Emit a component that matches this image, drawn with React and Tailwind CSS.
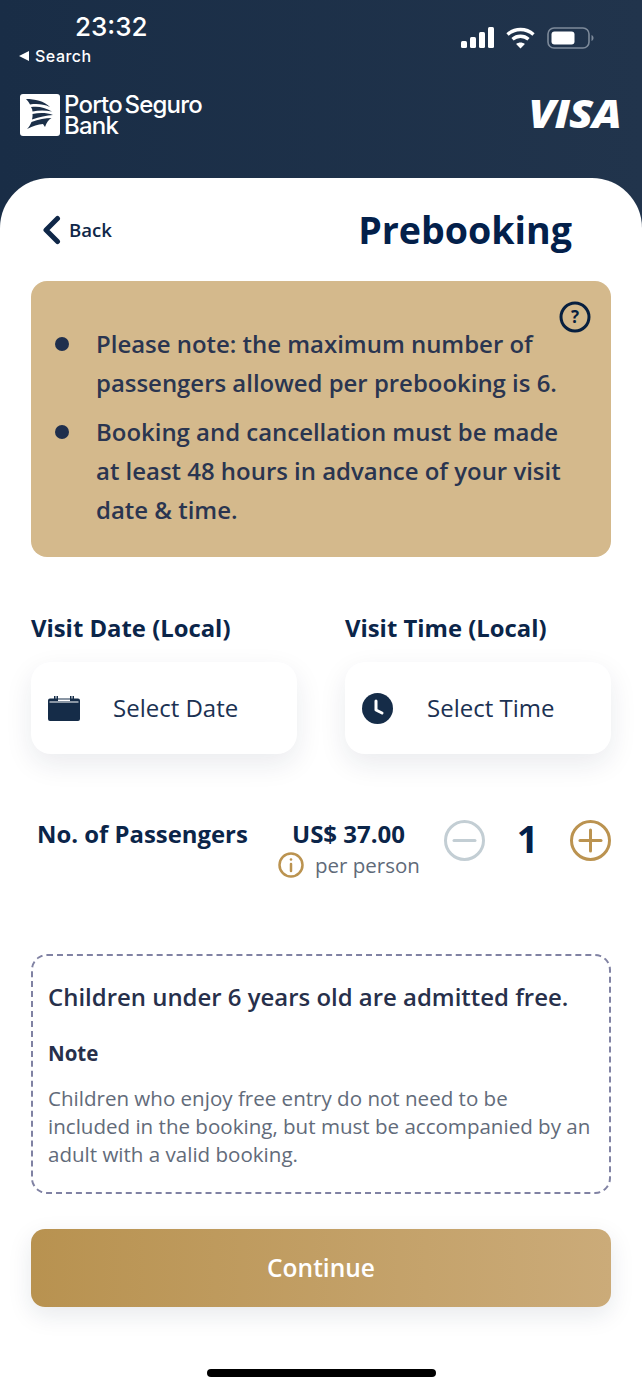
import React from "react";

const NAVY = "#0f2748";

function Signal() {
  return (
    <svg width="33" height="21" viewBox="0 0 33 21" fill="#fff">
      <rect x="0" y="14" width="6" height="7" rx="1.5" />
      <rect x="9" y="10" width="6" height="11" rx="1.5" />
      <rect x="18" y="5" width="6" height="16" rx="1.5" />
      <rect x="27" y="0" width="6" height="21" rx="1.5" />
    </svg>
  );
}

function Wifi() {
  return (
    <svg width="29" height="22" viewBox="0 0 29 22" fill="none" stroke="#fff" strokeWidth="3.4">
      <path d="M1.5 7.5C9 .8 20 .8 27.5 7.5" />
      <path d="M6.5 12.3c4.6-4 11.4-4 16 0" />
      <path d="M14.5 21.5l-4.4-4.6c2.5-2 6.3-2 8.8 0z" fill="#fff" stroke="none" />
    </svg>
  );
}

function Battery() {
  return (
    <svg width="47" height="22" viewBox="0 0 47 22" fill="none">
      <rect x="1" y="1" width="41" height="20" rx="6" stroke="#7d8a9a" strokeWidth="1.6" />
      <rect x="4.5" y="4.5" width="23" height="13" rx="3" fill="#fff" />
      <path d="M44.5 8v6c1.4-.5 2-1.7 2-3s-.6-2.500-2-3z" fill="#7d8a9a" />
    </svg>
  );
}

function PortoLogo() {
  return (
    <svg width="40" height="42" viewBox="0 0 40 42">
      <rect width="40" height="42" rx="3" fill="#fff" />
      <path d="M6 5c9 0 18 2 24 8-7-3-13-3.500-20-2.500C9 8.500 7.500 6.500 6 5z" fill="#1b2f48" />
      <path d="M11 13c7-1 14 0 21 4.500-7-1.500-13-1.500-19.500 0 0-1.500-.5-3-1.500-4.500z" fill="#1b2f48" />
      <path d="M12.500 20c7-1.500 14-1.500 20.500 1-6.500.5-13.500 2-21 4.500.5-2 .7-3.500.5-5.500z" fill="#1b2f48" />
      <path d="M11.500 28c7-2.500 14-4 20-4-3 2-5 4.500-6.500 9l-2-3c-5 .5-10 2-16 5 2-2 3.500-4.500 4.500-7z" fill="#1b2f48" />
    </svg>
  );
}

function CalendarIcon() {
  return (
    <svg width="32" height="25" viewBox="0 0 32 25" fill="#152c48">
      <path d="M2 2.500h4V0h1.500v2.500h1V0H10v2.500h12V0h1.500v2.500h1V0H26v2.500h4a2 2 0 0 1 2 2V23a2 2 0 0 1-2 2H2a2 2 0 0 1-2-2V4.500a2 2 0 0 1 2-2z" />
      <rect x="10" y="3.500" width="12" height="1.500" fill="#fff" />
      <rect x="1.500" y="5.500" width="29" height="1" fill="#fff" />
    </svg>
  );
}

function ClockIcon() {
  return (
    <svg width="31" height="31" viewBox="0 0 31 31">
      <circle cx="15.500" cy="15.500" r="15.500" fill="#152c48" />
      <path d="M14 8v9l6 3" fill="none" stroke="#fff" strokeWidth="3" strokeLinecap="round" strokeLinejoin="round" />
    </svg>
  );
}

function Bullet({ children }) {
  return (
    <div className="flex">
      <div className="w-[65px] shrink-0 pl-[24px] pt-[13px]">
        <div className="w-[14px] h-[14px] rounded-full bg-[#1f2f4d]" />
      </div>
      <div className="text-[23.950px] leading-[39px] font-semibold text-[#2a3550] whitespace-pre-line">{children}</div>
    </div>
  );
}

function RoundButton({ color, plus }) {
  return (
    <svg width="41" height="41" viewBox="0 0 41 41" fill="none" stroke={color} strokeWidth="3">
      <circle cx="20.500" cy="20.500" r="19" />
      <path d="M10 20.500h21" strokeLinecap="round" />
      {plus && <path d="M20.500 10v21" strokeLinecap="round" />}
    </svg>
  );
}

export default function App() {
  return (
    <div
      className="w-[642px] h-[1389px] overflow-hidden flex flex-col bg-[linear-gradient(90deg,#192d46,#21344c)]"
      style={{ fontFamily: '"Open Sans", sans-serif' }}
    >
      <header className="h-[178px] shrink-0 text-white">
        <div className="h-[88px] flex justify-between pr-[48px]">
          <div className="pl-[19px] pt-[11px]" style={{ fontFamily: 'Inter, sans-serif' }}>
            <div className="pl-[56px] text-[26px] leading-[32px] font-medium">23:32</div>
            <div className="flex items-center gap-[6px] mt-[3px] text-[16px] leading-[20px] font-medium tracking-[0.5px]">
              <span className="w-0 h-0 border-y-[5.500px] border-y-transparent border-r-[10px] border-r-white" />
              Search
            </div>
          </div>
          <div className="flex items-start gap-[12px] pt-[27px]">
            <Signal />
            <Wifi />
            <Battery />
          </div>
        </div>
        <div className="flex justify-between items-start pl-[20px] pr-[21px] pt-[6px]">
          <div className="flex gap-[4px]">
            <PortoLogo />
            <div className="text-[24px] leading-[21px] font-medium tracking-[-0.8px] [word-spacing:-3px]" style={{ fontFamily: 'Inter, sans-serif' }}>
              <div>Porto Seguro</div>
              <div>Bank</div>
            </div>
          </div>
          <div className="text-[39px] leading-[38px] font-extrabold italic tracking-[-1px] origin-right scale-x-[1.13]">
            VISA
          </div>
        </div>
      </header>

      <main className="flex-1 bg-white rounded-t-[50px] px-[31px] flex flex-col">
        <div className="h-[103px] flex justify-between items-center shrink-0 pr-[39px]">
          <div className="flex items-center gap-[8px] pl-[11px]">
            <svg width="19" height="30" viewBox="0 0 19 30" fill="none" stroke={NAVY} strokeWidth="5" strokeLinecap="round" strokeLinejoin="round">
              <path d="M15.500 3.500L4 15l11.500 11.500" />
            </svg>
            <span className="text-[18.600px] font-semibold text-[#0f2748]">Back</span>
          </div>
          <h1 className="text-[37.600px] leading-[48px] font-bold text-[#03204a]">Prebooking</h1>
        </div>

        <section className="relative h-[276px] shrink-0 rounded-[16px] bg-[#d4b98c] pt-[43px] flex flex-col gap-[10px]">
          <svg className="absolute right-[20px] top-[20px]" width="32" height="32" viewBox="0 0 32 32" fill="none">
            <circle cx="16" cy="16" r="14" stroke="#071f3f" strokeWidth="3" />
            <text x="16" y="22" textAnchor="middle" fontSize="17" fontWeight="700" fill="#071f3f" fontFamily="Open Sans">?</text>
          </svg>
          <Bullet>{"Please note: the maximum number of\npassengers allowed per prebooking is 6."}</Bullet>
          <Bullet>{"Booking and cancellation must be made\nat least 48 hours in advance of your visit\ndate & time."}</Bullet>
        </section>

        <div className="grid grid-cols-[266px_266px] justify-between mt-[54px] shrink-0">
          <div>
            <div className="text-[23.850px] leading-[34px] font-bold text-[#0b2549]">Visit Date (Local)</div>
            <div className="mt-[17px] h-[92px] rounded-[20px] bg-white shadow-[0_10px_28px_rgba(20,35,70,0.09)] flex items-center pl-[17px] text-[24px] text-[#1b3152]">
              <CalendarIcon />
              <span className="ml-[33px]">Select Date</span>
            </div>
          </div>
          <div>
            <div className="text-[23.850px] leading-[34px] font-bold text-[#0b2549]">Visit Time (Local)</div>
            <div className="mt-[17px] h-[92px] rounded-[20px] bg-white shadow-[0_10px_28px_rgba(20,35,70,0.09)] flex items-center pl-[17px] text-[24px] text-[#1b3152]">
              <ClockIcon />
              <span className="ml-[34px]">Select Time</span>
            </div>
          </div>
        </div>

        <div className="flex items-start mt-[63px] h-[90px] shrink-0">
          <div className="pl-[6px] w-[247px] text-[23.900px] leading-[34px] font-bold text-[#0b2549]">No. of Passengers</div>
          <div className="w-[166px] flex flex-col">
            <div className="pl-[14px] text-[24px] leading-[34px] font-bold text-[#0b2549]">US$ 37.00</div>
            <div className="flex items-center mt-[-1px]">
              <svg width="26" height="26" viewBox="0 0 26 26" fill="none" stroke="#bb9350">
                <circle cx="13" cy="13" r="11.500" strokeWidth="2.500" />
                <path d="M13 12v7" strokeWidth="2.500" strokeLinecap="round" />
                <circle cx="13" cy="7.500" r="1.300" fill="#bb9350" stroke="none" />
              </svg>
              <span className="ml-[11px] text-[20.500px] leading-[30px] text-[#5f6a79]">per person</span>
            </div>
          </div>
          <div className="mt-[2px] flex items-center justify-between w-[167px]">
            <RoundButton color="#c3ced4" />
            <span className="mb-[4px] text-[38px] leading-[38px] font-bold text-[#03204a]">1</span>
            <RoundButton color="#bb9350" plus />
          </div>
        </div>

        <section className="mt-[47px] h-[240px] shrink-0 rounded-[16px] border-2 border-dashed border-[#8082a3] pl-[15px] pt-[23px]">
          <div className="text-[23.950px] leading-[36px] font-semibold text-[#27304b]">Children under 6 years old are admitted free.</div>
          <div className="mt-[24px] text-[20.500px] leading-[28px] font-bold text-[#27304b]">Note</div>
          <p className="mt-[17px] text-[20.550px] leading-[28px] text-[#626b7a] whitespace-pre-line">
            {"Children who enjoy free entry do not need to be\nincluded in the booking, but must be accompanied by an\nadult with a valid booking."}
          </p>
        </section>

        <button className="mt-[35px] h-[78px] shrink-0 rounded-[14px] bg-[linear-gradient(90deg,#b89250,#cbab79)] shadow-[0_8px_24px_rgba(20,35,70,0.10)] text-[24.500px] font-semibold text-white">
          Continue
        </button>

        <div className="mt-[62px] self-center w-[229px] h-[8px] rounded-full bg-black shrink-0" />
      </main>
    </div>
  );
}
